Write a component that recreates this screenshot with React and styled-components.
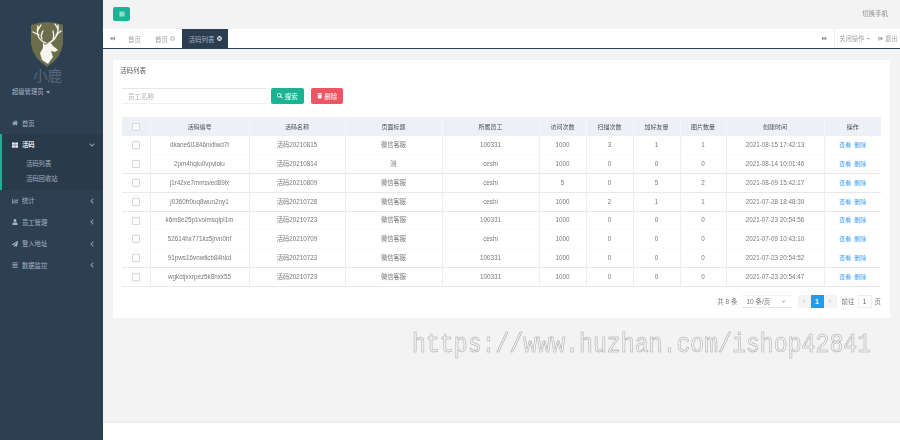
import React from "react";
import styled, { createGlobalStyle } from "styled-components";
import {
  FaBars,
  FaBackward,
  FaForward,
  FaHome,
  FaThLarge,
  FaChartBar,
  FaUser,
  FaPaperPlane,
  FaAlignJustify,
  FaSearch,
  FaTrash,
  FaTimesCircle,
  FaSignOutAlt,
  FaChevronDown,
  FaChevronLeft,
  FaChevronRight,
  FaCaretDown,
} from "react-icons/fa";

const GlobalStyle = createGlobalStyle`
  html, body {
    margin: 0;
    padding: 0;
    background: #f3f3f4;
  }
  * {
    box-sizing: border-box;
  }
  body {
    font-family: "Liberation Sans", "Noto Sans CJK SC", sans-serif;
    font-size: 7px;
    color: #676a6c;
  }
`;

const Page = styled.div`
  position: relative;
  display: flex;
  width: 900px;
  height: 440px;
  overflow: hidden;
  filter: blur(0.3px);
`;

const Sidebar = styled.aside`
  flex: 0 0 103px;
  background: #2d4052;
  display: flex;
  flex-direction: column;
`;

const Profile = styled.div`
  height: 112.5px;
  padding-top: 21px;
  display: flex;
  flex-direction: column;
`;

const LogoWrap = styled.div`
  display: flex;
  justify-content: center;
  padding-right: 10px;
`;

const LogoName = styled.div`
  text-align: center;
  padding-right: 8px;
  font-size: 14.5px;
  line-height: 18px;
  color: #55677a;
`;

const RoleLine = styled.div`
  margin-top: 2px;
  padding-left: 12px;
  font-size: 6.3px;
  line-height: 10px;
  color: #a7b1c2;
  display: flex;
  align-items: center;
  gap: 2px;
`;

const Menu = styled.nav`
  display: flex;
  flex-direction: column;
`;

const MenuItem = styled.div`
  height: 21.5px;
  padding: 0 8px 0 12px;
  display: flex;
  align-items: center;
  gap: 4px;
  font-size: 6.3px;
  color: ${(props) => (props.$active ? "#e8edf2" : "#a7b1c2")};
  font-weight: ${(props) => (props.$active ? 700 : 400)};
  svg:first-child {
    font-size: 6px;
  }
`;

const MenuLabel = styled.span`
  flex: 1;
`;

const MenuArrow = styled.span`
  display: flex;
  font-size: 4px;
  color: #93a0b2;
`;

const ActiveGroup = styled.div`
  background: #293a4b;
  border-left: 2px solid #1ab394;
  height: 56px;
  ${MenuItem} {
    padding-left: 10px;
  }
`;

const SubItem = styled.div`
  height: 15px;
  padding-left: 24px;
  display: flex;
  align-items: center;
  font-size: 6.3px;
  color: #a7b1c2;
`;

const Main = styled.main`
  flex: 1;
  min-width: 0;
  display: flex;
  flex-direction: column;
`;

const TopBar = styled.header`
  height: 29px;
  padding: 7px 10px 0 10px;
  display: flex;
  justify-content: space-between;
  align-items: flex-start;
  background: #f3f3f4;
`;

const MenuButton = styled.button`
  width: 17px;
  height: 14px;
  border: 0;
  padding: 0;
  border-radius: 2px;
  background: #1ab394;
  color: #fff;
  font-size: 6px;
  display: flex;
  align-items: center;
  justify-content: center;
`;

const SwitchLink = styled.span`
  padding-right: 2px;
  font-size: 6.5px;
  line-height: 14px;
  color: #8b8d8f;
`;

const TabBar = styled.div`
  height: 20px;
  display: flex;
  align-items: stretch;
  background: #fff;
  border-bottom: 1px solid #2f4050;
`;

const TabNav = styled.div`
  flex: 0 0 ${(props) => props.$width}px;
  display: flex;
  align-items: center;
  justify-content: center;
  font-size: 5px;
  color: #9a9c9e;
`;

const Tab = styled.div`
  padding: 0 ${(props) => (props.$active ? "6.5px" : "7px")};
  display: flex;
  align-items: center;
  gap: 2px;
  font-size: 6.5px;
  color: ${(props) => (props.$active ? "#a7b1c2" : "#a3a5a7")};
  background: ${(props) => (props.$active ? "#2b3e50" : "transparent")};
  svg {
    font-size: 5px;
    color: ${(props) => (props.$active ? "#dfe4ea" : "#c4c6c8")};
  }
`;

const TabSpacer = styled.div`
  flex: 1;
`;

const TabAction = styled.div`
  padding: 0 ${(props) => props.$pad}px;
  display: flex;
  align-items: center;
  gap: 2px;
  font-size: 6.3px;
  color: #a0a2a4;
  border-left: ${(props) => (props.$divided ? "1px solid #eee" : "0")};
  svg {
    font-size: 5px;
  }
`;

const Content = styled.div`
  flex: 1;
  padding: 11px 10px 0 10px;
`;

const Card = styled.section`
  height: 258px;
  padding: 0 9px;
  background: #fff;
  display: flex;
  flex-direction: column;
`;

const CardTitle = styled.h5`
  margin: 0 0 0 -2px;
  height: 28px;
  padding-top: 6px;
  font-size: 6.5px;
  line-height: 10px;
  font-weight: 400;
  color: #55585a;
`;

const Toolbar = styled.div`
  display: flex;
  height: 16px;
  gap: 3px;
`;

const SearchInput = styled.div`
  width: 146px;
  padding-left: 6px;
  display: flex;
  align-items: center;
  font-size: 6.5px;
  color: #aeb0b2;
  border-top: 1px solid #e5e6e7;
  border-bottom: 1px solid #f0f0f1;
`;

const ActionButton = styled.button`
  border: 0;
  padding: 0;
  width: ${(props) => props.$width}px;
  margin-left: ${(props) => props.$offset || 0}px;
  border-radius: 2px;
  font-family: inherit;
  font-size: 6.5px;
  color: #fff;
  background: ${(props) => props.$bg};
  display: flex;
  align-items: center;
  justify-content: center;
  gap: 2px;
  svg {
    font-size: 5.5px;
  }
`;

const Table = styled.table`
  margin-top: 13px;
  width: 759px;
  table-layout: fixed;
  border-collapse: collapse;
`;

const HeadCell = styled.th`
  height: 19px;
  padding: 0;
  background: #edf1f6;
  border-left: 1px solid #f5f7fa;
  font-size: 6px;
  line-height: 10px;
  font-weight: 400;
  color: #4a4d50;
  text-align: center;
  &:first-child {
    border-left: 0;
  }
`;

const Row = styled.tr`
  height: 18.75px;
  border-bottom: 1px solid ${(props) => (props.$plain ? "#fafbfb" : "#e6e8eb")};
`;

const Cell = styled.td`
  padding: 0;
  border-left: 1px solid #ebeef2;
  font-size: 6.3px;
  line-height: 10px;
  color: #75787b;
  text-align: center;
  white-space: nowrap;
  overflow: hidden;
  &:first-child {
    border-left: 0;
  }
`;

const CheckBox = styled.span`
  display: inline-block;
  vertical-align: middle;
  width: 8px;
  height: 8px;
  background: #fff;
  border: 1px solid #d3d6da;
  border-radius: 1px;
`;

const LinkText = styled.a`
  color: #409eff;
  margin: 0 1.5px;
  font-size: 6px;
`;

const Pager = styled.div`
  margin-top: 8px;
  display: flex;
  justify-content: flex-end;
  align-items: center;
  height: 13px;
  font-size: 6.5px;
  color: #77797b;
`;

const PageSelect = styled.div`
  margin-left: 4px;
  width: 50px;
  height: 13px;
  padding: 0 5px;
  display: flex;
  align-items: center;
  justify-content: space-between;
  border-bottom: 1px solid #e4e7ed;
  border-top: 1px solid #f2f3f5;
  svg {
    color: #c0c4cc;
    font-size: 7px;
  }
`;

const PagerButton = styled.span`
  width: 13px;
  height: 13px;
  margin-left: ${(props) => props.$gap || 0}px;
  display: flex;
  align-items: center;
  justify-content: center;
  font-size: ${(props) => (props.$icon ? "4px" : "7px")};
  font-weight: 700;
  color: ${(props) => (props.$active ? "#fff" : "#c0c4cc")};
  background: ${(props) => (props.$active ? "#1e9bf5" : "#f4f4f5")};
`;

const JumpLabel = styled.span`
  margin-left: ${(props) => props.$gap}px;
`;

const JumpInput = styled.span`
  width: 14px;
  height: 13px;
  margin: 0 3px;
  display: flex;
  align-items: center;
  justify-content: center;
  border: 1px solid #eceef1;
  color: #606266;
`;

const Footer = styled.footer`
  height: 18px;
  background: #fff;
  border-top: 1px solid #e7eaec;
`;

// 스크린샷 위에 찍힌 글자라서 absolute
const Watermark = styled.div`
  position: absolute;
  left: 412px;
  top: 330px;
  font-family: "Liberation Mono", monospace;
  font-size: 23.2px;
  line-height: 26px;
  white-space: nowrap;
  color: #f3f3f4;
  -webkit-text-stroke: 0.5px #a9a9a9;
  transform: scaleY(1.18);
  transform-origin: left top;
`;

const Logo = () => (
  <svg width="34" height="46" viewBox="0 0 34 46">
    <path d="M1 4 Q17 -2 33 4 L33 23 Q31 37 17 46 Q3 37 1 23 Z" fill="#6b6e4c" />
    <g fill="none" stroke="#f7f6ee" strokeWidth="1.3" strokeLinecap="round">
      <path d="M16 22 C10 20 6 15 8 5" />
      <path d="M9 14 L3 11" />
      <path d="M8 9 L11 4" />
      <path d="M12 18 C10 14 12 12 13 10" />
      <path d="M19 22 C25 19 29 14 28 4" />
      <path d="M26 14 L31 10" />
      <path d="M28 8 L25 3" />
      <path d="M23 18 C25 15 23 12 23 10" />
    </g>
    <path
      d="M13 21 L15 24 L20 21 L23 25 L28 29 L25 31 L21 30 L23 36 L18 43 L12 39 L10 32 L13 27 Z"
      fill="#f7f6ee"
    />
  </svg>
);

const columns = [28, 99, 96, 97, 97, 47, 47, 47, 46, 98, 57];
const heads = ["活码编号", "活码名称", "页面标题", "所属员工", "访问次数", "扫描次数", "加好友量", "图片数量", "创建时间", "操作"];

const rows = [
  { code: "dkane6l1846nxfiwd7t", name: "活码20210815", title: "微信客服", staff: "100331", visit: 1000, scan: 3, add: 1, pic: 1, time: "2021-08-15 17:42:13", plain: true },
  { code: "2pm4hqlu0vpvlolu", name: "活码20210814", title: "测", staff: "ceshi", visit: 1000, scan: 0, add: 0, pic: 0, time: "2021-08-14 10:01:46" },
  { code: "j1r42xe7mmsved89lx", name: "活码20210809", title: "微信客服", staff: "ceshi", visit: 5, scan: 0, add: 5, pic: 2, time: "2021-08-09 15:42:17" },
  { code: "j0360fr0uq8wun2ny1", name: "活码20210728", title: "微信客服", staff: "ceshi", visit: 1000, scan: 2, add: 1, pic: 1, time: "2021-07-28 18:48:39" },
  { code: "k6m8e25p1volmsqlpl1m", name: "活码20210723", title: "微信客服", staff: "100331", visit: 1000, scan: 0, add: 0, pic: 0, time: "2021-07-23 20:54:56", plain: true },
  { code: "52614hx771kz5jrvn0hf", name: "活码20210709", title: "微信客服", staff: "ceshi", visit: 1000, scan: 0, add: 0, pic: 0, time: "2021-07-09 10:43:10", plain: true },
  { code: "91pws16vnwtlcb84hkd", name: "活码20210723", title: "微信客服", staff: "100331", visit: 1000, scan: 0, add: 0, pic: 0, time: "2021-07-23 20:54:52" },
  { code: "wgkctjxxrpez5k8hxx55", name: "活码20210723", title: "微信客服", staff: "100331", visit: 1000, scan: 0, add: 0, pic: 0, time: "2021-07-23 20:54:47" },
];

const menus = [
  { icon: <FaChartBar />, label: "统计" },
  { icon: <FaUser />, label: "员工管理" },
  { icon: <FaPaperPlane />, label: "登入地址" },
  { icon: <FaAlignJustify />, label: "数据监控" },
];

const App = () => {
  return (
    <>
      <GlobalStyle />
      <Page>
        <Sidebar>
          <Profile>
            <LogoWrap>
              <Logo />
            </LogoWrap>
            <LogoName>小鹿</LogoName>
            <RoleLine>
              超级管理员
              <FaCaretDown />
            </RoleLine>
          </Profile>
          <Menu>
            <MenuItem>
              <FaHome />
              <MenuLabel>首页</MenuLabel>
            </MenuItem>
            <ActiveGroup>
              <MenuItem $active>
                <FaThLarge />
                <MenuLabel>活码</MenuLabel>
                <MenuArrow>
                  <FaChevronDown />
                </MenuArrow>
              </MenuItem>
              <SubItem>活码列表</SubItem>
              <SubItem>活码回收站</SubItem>
            </ActiveGroup>
            {menus.map((menu) => (
              <MenuItem key={menu.label}>
                {menu.icon}
                <MenuLabel>{menu.label}</MenuLabel>
                <MenuArrow>
                  <FaChevronLeft />
                </MenuArrow>
              </MenuItem>
            ))}
          </Menu>
        </Sidebar>
        <Main>
          <TopBar>
            <MenuButton>
              <FaBars />
            </MenuButton>
            <SwitchLink>切换手机</SwitchLink>
          </TopBar>
          <TabBar>
            <TabNav $width={18}>
              <FaBackward />
            </TabNav>
            <Tab>首页</Tab>
            <Tab>
              首页
              <FaTimesCircle />
            </Tab>
            <Tab $active>
              活码列表
              <FaTimesCircle />
            </Tab>
            <TabSpacer />
            <TabNav $width={20}>
              <FaForward />
            </TabNav>
            <TabAction $pad={4} $divided>
              关闭操作
              <FaCaretDown />
            </TabAction>
            <TabAction $pad={2.5}>
              <FaSignOutAlt />
              退出
            </TabAction>
          </TabBar>
          <Content>
            <Card>
              <CardTitle>活码列表</CardTitle>
              <Toolbar>
                <SearchInput>员工名称</SearchInput>
                <ActionButton $bg="#1ab394" $width={33}>
                  <FaSearch />
                  搜索
                </ActionButton>
                <ActionButton $bg="#ed5565" $width={32} $offset={4}>
                  <FaTrash />
                  删除
                </ActionButton>
              </Toolbar>
              <Table>
                <colgroup>
                  {columns.map((width, index) => (
                    <col key={index} style={{ width }} />
                  ))}
                </colgroup>
                <thead>
                  <tr>
                    <HeadCell>
                      <CheckBox />
                    </HeadCell>
                    {heads.map((head) => (
                      <HeadCell key={head}>{head}</HeadCell>
                    ))}
                  </tr>
                </thead>
                <tbody>
                  {rows.map((row) => (
                    <Row key={row.code} $plain={row.plain}>
                      <Cell>
                        <CheckBox />
                      </Cell>
                      <Cell>{row.code}</Cell>
                      <Cell>{row.name}</Cell>
                      <Cell>{row.title}</Cell>
                      <Cell>{row.staff}</Cell>
                      <Cell>{row.visit}</Cell>
                      <Cell>{row.scan}</Cell>
                      <Cell>{row.add}</Cell>
                      <Cell>{row.pic}</Cell>
                      <Cell>{row.time}</Cell>
                      <Cell>
                        <LinkText>查看</LinkText>
                        <LinkText>删除</LinkText>
                      </Cell>
                    </Row>
                  ))}
                </tbody>
              </Table>
              <Pager>
                共 8 条
                <PageSelect>
                  10 条/页
                  <FaCaretDown />
                </PageSelect>
                <PagerButton $icon $gap={6}>
                  <FaChevronLeft />
                </PagerButton>
                <PagerButton $active>1</PagerButton>
                <PagerButton $icon>
                  <FaChevronRight />
                </PagerButton>
                <JumpLabel $gap={5}>前往</JumpLabel>
                <JumpInput>1</JumpInput>页
              </Pager>
            </Card>
          </Content>
          <Footer />
        </Main>
        <Watermark>https://www.huzhan.com/ishop42841</Watermark>
      </Page>
    </>
  );
};

export default App;
